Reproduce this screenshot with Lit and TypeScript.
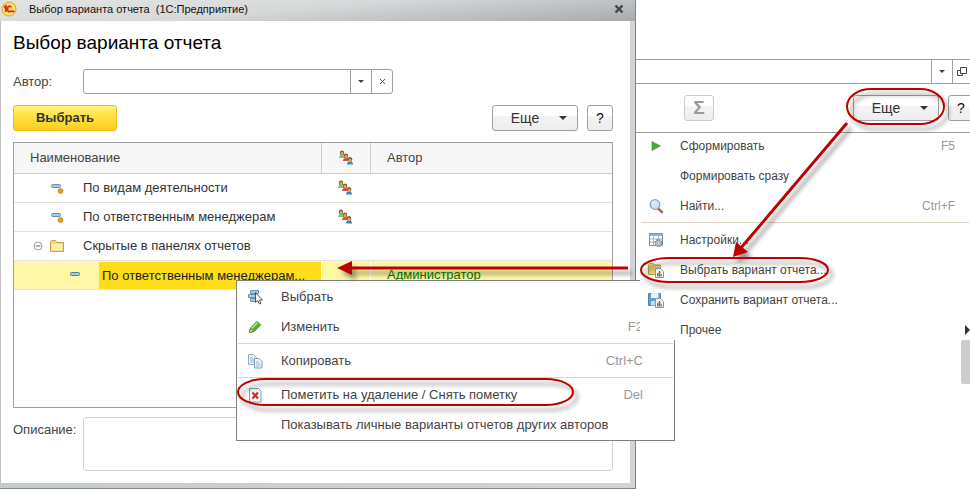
import { LitElement, html, svg, css, nothing, TemplateResult } from "lit";
import { customElement, property } from "lit/decorators.js";
import { classMap } from "lit/directives/class-map.js";

const person = (x: number, y: number, body: string) => svg`
  <path d="M${x - 3} ${y + 5}q0-3 3-3t3 3z" fill="${body}"/>
  <ellipse cx="${x}" cy="${y}" rx="2.2" ry="2.6" fill="#5a3d22"/>
  <ellipse cx="${x}" cy="${y + 0.6}" rx="1.6" ry="2" fill="#e8a050"/>`;

const reportSheet = svg`
  <path d="M7.5 6.5h5l3 3v6h-8z" fill="#f4f8fc" stroke="#7d9bb8"/>
  <path d="M9 11h1.6v3.5H9z" fill="#3f9a52"/>
  <path d="M10.8 9h1.6v5.5h-1.6z" fill="#d9412e"/>
  <path d="M12.6 12h1.4v2.5h-1.4z" fill="#d9742e"/>`;

const icons: Record<string, TemplateResult> = {
  people: html`<svg viewBox="0 0 16 16" width="16" height="16">
    ${person(4, 3, "#6fd07a")}${person(8, 6, "#d9485a")}${person(12, 9.6, "#2f86c8")}</svg>`,
  item: html`<svg viewBox="0 0 16 16" width="16" height="16">
    <rect x="3.5" y="5.5" width="9" height="3" rx="1" fill="#a9c9e2" stroke="#55809f"/></svg>`,
  itemDot: html`<svg viewBox="0 0 16 16" width="16" height="16">
    <rect x="2.5" y="4.5" width="9" height="3" rx="1" fill="#a9c9e2" stroke="#6a91ae"/>
    <circle cx="11.5" cy="11" r="2.5" fill="#e5a02c" stroke="#b9781c" stroke-width=".6"/></svg>`,
  folder: html`<svg viewBox="0 0 16 16" width="16" height="16">
    <path d="M1.5 13.5v-10l1-1h4l1.5 2h6.500v9z" fill="#f7d97a" stroke="#c9a040"/>
    <path d="M2.5 6h11v6.5h-11z" fill="#fdeeaa"/></svg>`,
  minus: html`<svg viewBox="0 0 10 10" width="10" height="10">
    <circle cx="5" cy="5" r="4" fill="#fff" stroke="#a0a0a0"/><path d="M2.5 5h5" stroke="#666"/></svg>`,
  select: html`<svg viewBox="0 0 16 16" width="16" height="16">
    <path d="M3.5 1.5h8v3h-8zM1.5 5.5h8v3h-8zM3.5 9.5h6v3h-6z" fill="#a9cbe0" stroke="#6d93ad"/>
    <path d="M8.500 3.500v10l2.300-2 1.600 3.500 1.600-.8-1.600-3.200h3z" fill="#fff" stroke="#555"/></svg>`,
  pencil: html`<svg viewBox="0 0 16 16" width="16" height="16">
    <path d="M2.5 13.5l1-4.500 6.500-6.500 3.500 3.500-6.500 6.500z" fill="#55b82c" stroke="#2d7d17"/>
    <path d="M4.500 9.500l6-6" stroke="#b4ec8c" stroke-width="1.5"/>
    <path d="M2.5 13.500l1-4 3 3z" fill="#f0dca4" stroke="#5e6b2c" stroke-width=".6"/></svg>`,
  copy: html`<svg viewBox="0 0 16 16" width="16" height="16">
    <path d="M1.5 1.5h5l3 3v7h-8z" fill="#edf3fa" stroke="#8fabc8"/>
    <path d="M3 5h3M3 7h4M3 9h4" stroke="#9cb6cf"/>
    <path d="M7.500 5.500h4.500l3 3v6.500h-7.500z" fill="#edf3fa" stroke="#7f9dbb"/>
    <path d="M9 9h3M9 11h4.500M9 13h4.500" stroke="#9cb6cf"/></svg>`,
  remove: html`<svg viewBox="0 0 16 16" width="16" height="16">
    <path d="M2.5 1.500h9l2.500 2.500v11h-11.500z" fill="#f1f6fb" stroke="#7f9dbb"/>
    <path d="M5.500 5.500l5.500 6M11 5.500l-5.500 6" stroke="#d32a1c" stroke-width="2.2"/></svg>`,
  play: html`<svg viewBox="0 0 16 16" width="16" height="16">
    <path d="M4 3.500v9l8.500-4.500z" fill="#41b02c" stroke="#6b8a5f" stroke-width=".7"/></svg>`,
  search: html`<svg viewBox="0 0 16 16" width="16" height="16">
    <path d="M10 10.500l4 3.500" stroke="#a9714a" stroke-width="2.6" stroke-linecap="round"/>
    <circle cx="7" cy="6.500" r="4.800" fill="#cfe4fa" stroke="#9a9fb0" stroke-width="1.3"/>
    <path d="M4.500 6q.5-2.500 3-2.500" stroke="#fff" fill="none"/></svg>`,
  settings: html`<svg viewBox="0 0 16 16" width="16" height="16">
    <path d="M1.500 1.500h13v12h-13z" fill="#fff" stroke="#7595b5"/>
    <path d="M1.500 2h13v2h-13z" fill="#8fb0d0"/>
    <path d="M5.500 2v11M10.500 2v11M2 7h12M2 10h12" stroke="#9db4cc"/>
    <circle cx="10.500" cy="11" r="3.200" fill="#c9ccd0" stroke="#80858c" stroke-width="1.6" stroke-dasharray="1.7 .8"/>
    <circle cx="10.500" cy="11" r="1.200" fill="#fff" stroke="#80858c" stroke-width=".6"/></svg>`,
  openReport: html`<svg viewBox="0 0 16 16" width="16" height="16">
    <path d="M.5 12.500v-10l1-1h4l1 1.500h6v9.500z" fill="#e6cb6e" stroke="#c0a14a"/>${reportSheet}</svg>`,
  saveReport: html`<svg viewBox="0 0 16 16" width="16" height="16">
    <path d="M.5 1.500h12v12h-12z" fill="#6a9cc8" stroke="#4f83b2"/>
    <path d="M3 1h7.500v5h-7.500z" fill="#e6f0f8"/><path d="M3 9h5v4.500h-5z" fill="#c8dcec"/>${reportSheet}</svg>`,
  down: html`<svg viewBox="0 0 8 4" width="8" height="4"><path d="M0 0h8l-4 4z" fill="#333"/></svg>`,
  downSmall: html`<svg viewBox="0 0 6 3" width="6" height="3"><path d="M0 0h6l-3 3z" fill="#444"/></svg>`,
  clear: html`<svg viewBox="0 0 5 5" width="5" height="5"><path d="M0 0l5 5M5 0l-5 5" stroke="#555"/></svg>`,
  close: html`<svg viewBox="0 0 10 10" width="10" height="10">
    <path d="M1.500 1.500l7 7M8.500 1.500l-7 7" stroke="#444" stroke-width="2.4"/></svg>`,
  windows: html`<svg viewBox="0 0 10 10" width="10" height="10" fill="none" stroke="#444">
    <path d="M3.500.5h6v6h-6zM3 3.500h-2.500v5h5v-2"/></svg>`,
  logo: html`<svg viewBox="0 0 16 16" width="16" height="16">
    <circle cx="8" cy="8" r="7" fill="#fbe36a" stroke="#e0a030"/>
    <path d="M3 6.500l1.700-1.500v6M10.500 6q-4-1.800-4 1.800t3 2.500h4" fill="none" stroke="#d8281c" stroke-width="1.8"/></svg>`,
};

const baseStyles = css`
  * { box-sizing: border-box; }
  svg { display: block; flex: none; }
  button, input, textarea { font: inherit; color: inherit; margin: 0; }
  button { padding: 0; border: 0; background: none; }
`;

interface Entry { label?: string; icon?: string; key?: string; sub?: boolean; }

@customElement("command-menu")
class CommandMenu extends LitElement {
  @property({ attribute: false }) entries: Entry[] = [];

  static styles = [baseStyles, css`
    :host { display: block; color: #444; }
    .list { list-style: none; margin: 0; padding: 0; }
    .sep { height: 1px; margin: 2px 1px 1px; background: #dcd4c4; }
    .entry {
      display: flex; align-items: center; width: 100%; height: 30px;
      padding: 2px var(--menu-end) 0 var(--menu-start);
      text-align: left; white-space: nowrap;
    }
    .icon { flex: none; width: 16px; margin-right: var(--menu-gap); }
    .label { flex: 1; }
    .key { color: #999; }
    .sub { width: 0; height: 0; border: 5px solid transparent; border-left-color: #333; margin-right: -20px; }
  `];

  render() {
    return html`<ul class="list" role="menu">${this.entries.map((e) => e.label
      ? html`<li role="none"><button class="entry" role="menuitem">
          <span class="icon">${e.icon ? icons[e.icon] : nothing}</span>
          <span class="label">${e.label}</span>
          ${e.key ? html`<span class="key">${e.key}</span>` : nothing}
          ${e.sub ? html`<span class="sub"></span>` : nothing}
        </button></li>`
      : html`<li class="sep" role="separator"></li>`)}</ul>`;
  }
}

const contextEntries: Entry[] = [
  { label: "Выбрать", icon: "select" },
  { label: "Изменить", icon: "pencil", key: "F2" },
  {},
  { label: "Копировать", icon: "copy", key: "Ctrl+C" },
  {},
  { label: "Пометить на удаление / Снять пометку", icon: "remove", key: "Del" },
  { label: "Показывать личные варианты отчетов других авторов" },
];

const moreEntries: Entry[] = [
  { label: "Сформировать", icon: "play", key: "F5" },
  { label: "Формировать сразу" },
  { label: "Найти...", icon: "search", key: "Ctrl+F" },
  {},
  { label: "Настройки...", icon: "settings" },
  { label: "Выбрать вариант отчета...", icon: "openReport" },
  { label: "Сохранить вариант отчета...", icon: "saveReport" },
  { label: "Прочее", sub: true },
];

interface Row { name: string; kind: string; shared?: boolean; author?: string; selected?: boolean; }

const rows: Row[] = [
  { name: "По видам деятельности", kind: "itemDot", shared: true },
  { name: "По ответственным менеджерам", kind: "itemDot", shared: true },
  { name: "Скрытые в панелях отчетов", kind: "folder" },
  { name: "По ответственным менеджерам...", kind: "item", author: "Администратор", selected: true },
];

@customElement("app-root")
class AppRoot extends LitElement {
  static styles = [baseStyles, css`
    :host {
      position: relative; display: grid;
      grid-template-columns: minmax(0, 636fr) minmax(0, 334fr);
      min-height: 100vh; overflow: hidden; background: #fff;
      font: 13px/16px "Liberation Sans", Arial, sans-serif; color: #444;
    }
    .dialog {
      position: relative; display: flex; flex-direction: column; margin-bottom: 1px;
      padding: 0 5px 5px 0; background: linear-gradient(90deg, #c4cccc, #d4d4d4);
      border: solid #858585; border-width: 0 1px 1px 0;
    }
    .titlebar {
      display: flex; align-items: center; height: 21px; margin-right: -5px; padding: 0 11px 3px 1px;
      background: linear-gradient(175deg, #e4e4e4, #d6d8d9 45%, #a8abad);
      font-size: 11px; color: #111; white-space: pre;
    }
    .caption { flex: 1; margin-left: 12px; }
    .body {
      flex: 1; display: flex; flex-direction: column; padding: 0 17px 12px 12px;
      border-left: 1px solid #c0c0c0; background: #fff;
    }
    .heading { margin: 10px 0 14px; font-size: 19px; line-height: 24px; font-weight: 400; color: #000; }
    .field { display: flex; }
    .field-label { flex: none; width: 70px; line-height: 26px; }
    .combo { display: flex; width: 310px; height: 25px; border: 1px solid #a0a0a0; border-radius: 3px; }
    .input { flex: 1; min-width: 0; border: 0; outline: 0; padding: 0 6px; background: none; }
    .combo-btn { display: grid; place-items: center; width: 21px; border-left: 1px solid #a0a0a0; }
    .commands { display: flex; gap: 9px; margin: 10px 0 11px; }
    .btn {
      display: flex; align-items: center; justify-content: center; height: 26px;
      border: 1px solid #a0a0a0; border-radius: 3px; color: #333; font-size: 14px;
      background: linear-gradient(#fff 40%, #f4f4f4 41%, #ededed);
    }
    .primary {
      width: 104px; margin-right: auto; font-size: 13px; font-weight: 700; border-color: #f0b81c;
      background: linear-gradient(#fff07a, #ffe13f 45%, #fdcd1d);
    }
    .more { width: 86px; gap: 20px; padding-left: 8px; }
    .help { width: 26px; color: #111; }
    .grid-box { flex: 1; border: 1px solid #a0a0a0; }
    .grid { width: 100%; table-layout: fixed; border-collapse: separate; border-spacing: 0; }
    .col-shared { width: 49px; }
    .col-author { width: 242px; }
    .grid th {
      height: 31px; padding: 0 16px; text-align: left; font-weight: 400; background: #f7f7f7;
      border-bottom: 1px solid #ccc; border-left: 1px solid #ccc;
    }
    .grid th:first-child { border-left: 0; }
    .grid td { height: 29px; padding: 0 16px; border-bottom: 1px solid #e2e2e2; color: #333; }
    .grid td.name { padding: 0; }
    .cell { display: flex; align-items: center; height: 28px; white-space: nowrap; }
    .toggle { width: 10px; margin: 0 6px 0 19px; }
    .cell-text { margin-left: 18px; }
    .grid .selected td { background: #fff6a6; border-left: 1px solid #fff; color: #008000; }
    .grid .selected td.name { border-left: 0; }
    .selected .cell { padding-left: 18px; color: #222; }
    .selected .cell-text {
      flex: 1; align-self: stretch; margin: 1px 0 0 16px; padding-left: 3px; line-height: 27px; background: #ffdd18;
    }
    .note { margin-top: 9px; }
    .area { flex: 1; height: 54px; border: 1px solid #d0d0d0; border-radius: 3px; resize: none; outline: 0; background: #fff; }
    .context {
      position: absolute; left: 236px; top: 280px; width: 439px; padding-bottom: 1px;
      border: 1px solid #808080; background: #fff; z-index: 1;
      --menu-start: 10px; --menu-gap: 18px; --menu-end: 31px;
    }
    .panel { position: relative; min-width: 0; padding-top: 59px; }
    .panel-field { display: flex; height: 25px; border: solid #a0a0a0; border-width: 1px 0; }
    .panel-field .combo-btn { width: 21px; flex: none; }
    .panel-field .open { width: 18px; }
    .toolbar {
      display: flex; align-items: center; height: 49px; border-bottom: 1px solid #a0a0a0;
      padding-left: 48px; overflow: hidden;
    }
    .toolbar .btn { flex: none; }
    .sigma { width: 30px; margin-right: auto; border-color: #ccc; color: #999; font-size: 19px; font-weight: 700; }
    .toolbar .more { margin-right: 9px; }
    .toolbar .help { margin-right: -4px; }
    .dropdown {
      position: relative; z-index: 2; height: 207px; margin-left: 4px; background: #fff; font-size: 12px;
      --menu-start: 8px; --menu-gap: 16px; --menu-end: 15px;
    }
    .dropdown-list { margin-top: -3px; position: absolute; inset: 0; }
    .thumb { width: 9px; height: 44px; margin-left: auto; border-radius: 2px 0 0 2px; background: #cdcdcd; }
    .marks {
      position: absolute; left: 0; top: 0; width: 100%; z-index: 3; pointer-events: none;
      fill: none; stroke: #c00000; stroke-width: 2;
      filter: drop-shadow(4px 5px 2px rgba(0, 0, 0, 0.4));
    }
  `];

  render() {
    return html`
      <section class="dialog">
        <div class="titlebar">${icons.logo}<span class="caption">Выбор варианта отчета  (1С:Предприятие)</span>
          <button aria-label="Закрыть">${icons.close}</button></div>
        <div class="body">
          <h1 class="heading">Выбор варианта отчета</h1>
          <div class="field">
            <label class="field-label" for="author">Автор:</label>
            <div class="combo">
              <input class="input" id="author">
              <button class="combo-btn" aria-label="Список">${icons.downSmall}</button>
              <button class="combo-btn" aria-label="Очистить">${icons.clear}</button>
            </div>
          </div>
          <div class="commands">
            <button class="btn primary">Выбрать</button>
            <button class="btn more">Еще ${icons.down}</button>
            <button class="btn help">?</button>
          </div>
          <div class="grid-box">
            <table class="grid">
              <colgroup><col><col class="col-shared"><col class="col-author"></colgroup>
              <thead><tr><th>Наименование</th><th>${icons.people}</th><th>Автор</th></tr></thead>
              <tbody>${rows.map((r) => html`
                <tr class=${classMap({ selected: !!r.selected })}>
                  <td class="name"><div class="cell">
                    <span class="toggle">${r.kind === "folder" ? icons.minus : nothing}</span>
                    ${icons[r.kind]}<span class="cell-text">${r.name}</span></div></td>
                  <td>${r.shared ? icons.people : nothing}</td>
                  <td>${r.author ?? nothing}</td>
                </tr>`)}</tbody>
            </table>
          </div>
          <div class="field note">
            <label class="field-label" for="note">Описание:</label>
            <textarea class="area" id="note"></textarea>
          </div>
        </div>
        <command-menu class="context" .entries=${contextEntries}></command-menu>
      </section>
      <section class="panel">
        <div class="panel-field">
          <input class="input" aria-label="Вариант">
          <button class="combo-btn" aria-label="Список">${icons.downSmall}</button>
          <button class="combo-btn open" aria-label="Открыть">${icons.windows}</button>
        </div>
        <div class="toolbar">
          <button class="btn sigma">Σ</button>
          <button class="btn more">Еще ${icons.down}</button>
          <button class="btn help">?</button>
        </div>
        <div class="dropdown"><div class="dropdown-list">
          <command-menu .entries=${moreEntries}></command-menu></div></div>
        <div class="thumb"></div>
      </section>
      <svg class="marks" viewBox="0 0 970 490">
        <rect x="847" y="89" width="97" height="35" rx="24" ry="17.5"/>
        <rect x="641" y="258" width="187" height="24" rx="28" ry="12"/>
        <rect x="238" y="379" width="335" height="26" rx="27" ry="13"/>
        <path d="M847 123L740 249M628 268H350" stroke-width="3"/>
        <path d="M733 257l3-15 12 10zM337 268l15-7v14z" fill="#c00000" stroke="none"/>
      </svg>`;
  }
}
